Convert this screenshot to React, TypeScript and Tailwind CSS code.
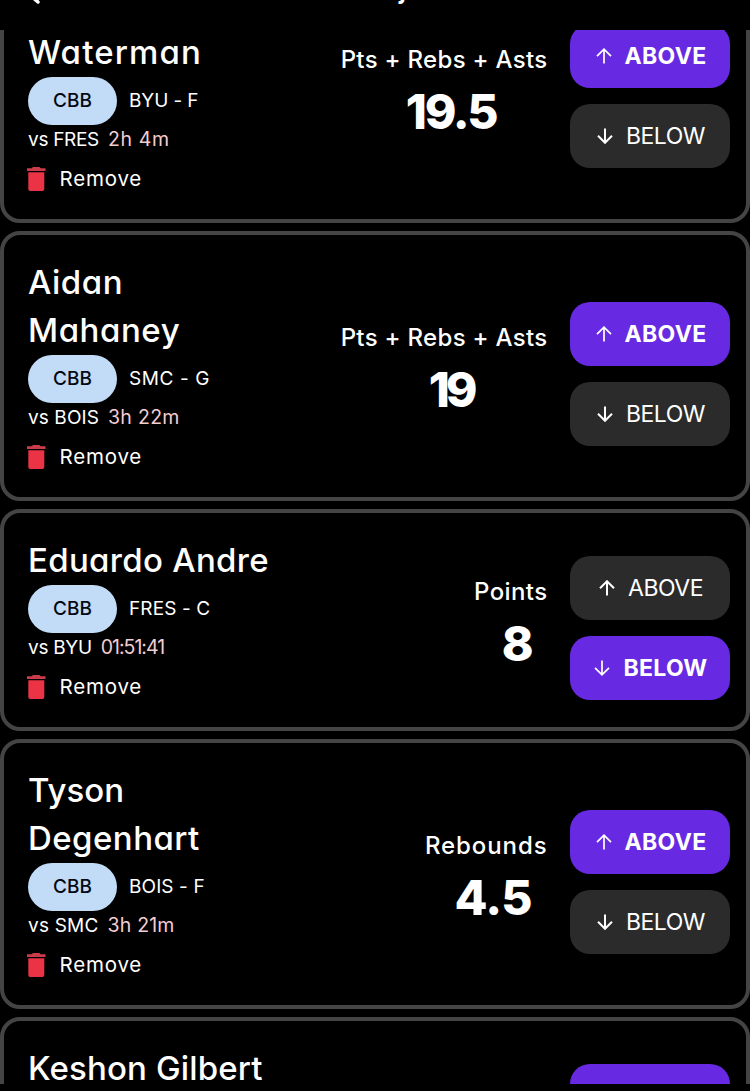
import * as React from "react";

type Pick = {
	name: { text: string; tracking: string }[];
	team: string;
	teamTracking: string;
	opponent: string;
	opponentTracking: string;
	starts: string;
	startsTracking: string;
	stat: string;
	statTracking: string;
	line: string;
	lineTracking: string;
	side: "above" | "below";
};

const picks: Pick[] = [
	{
		name: [
			{ text: "Robinson", tracking: "tracking-[0.5px]" },
			{ text: "Waterman", tracking: "tracking-[1.15px]" },
		],
		team: "BYU - F",
		teamTracking: "tracking-[-0.1px]",
		opponent: "vs FRES",
		opponentTracking: "tracking-[-0.3px]",
		starts: "2h 4m",
		startsTracking: "tracking-[0.6px]",
		stat: "Pts + Rebs + Asts",
		statTracking: "tracking-[0.3px]",
		line: "19.5",
		lineTracking: "tracking-[-2.2px]",
		side: "above",
	},
	{
		name: [
			{ text: "Aidan", tracking: "tracking-[0.5px]" },
			{ text: "Mahaney", tracking: "tracking-[0.55px]" },
		],
		team: "SMC - G",
		teamTracking: "tracking-[0.6px]",
		opponent: "vs BOIS",
		opponentTracking: "tracking-[0.1px]",
		starts: "3h 22m",
		startsTracking: "tracking-[0.3px]",
		stat: "Pts + Rebs + Asts",
		statTracking: "tracking-[0.3px]",
		line: "19",
		lineTracking: "tracking-[-4.2px]",
		side: "above",
	},
	{
		name: [{ text: "Eduardo Andre", tracking: "tracking-[0.3px]" }],
		team: "FRES - C",
		teamTracking: "tracking-[0.1px]",
		opponent: "vs BYU",
		opponentTracking: "tracking-[-0.3px]",
		starts: "01:51:41",
		startsTracking: "tracking-[-1px]",
		stat: "Points",
		statTracking: "tracking-[0.4px]",
		line: "8",
		lineTracking: "tracking-[0px]",
		side: "below",
	},
	{
		name: [
			{ text: "Tyson", tracking: "tracking-[0px]" },
			{ text: "Degenhart", tracking: "tracking-[0.45px]" },
		],
		team: "BOIS - F",
		teamTracking: "tracking-[0.1px]",
		opponent: "vs SMC",
		opponentTracking: "tracking-[0.2px]",
		starts: "3h 21m",
		startsTracking: "tracking-[0.2px]",
		stat: "Rebounds",
		statTracking: "tracking-[0.9px]",
		line: "4.5",
		lineTracking: "tracking-[-0.7px]",
		side: "above",
	},
	{
		name: [{ text: "Keshon Gilbert", tracking: "tracking-[0.15px]" }],
		team: "ISU - G",
		teamTracking: "tracking-[0px]",
		opponent: "vs TCU",
		opponentTracking: "tracking-[0px]",
		starts: "3h 21m",
		startsTracking: "tracking-[0.2px]",
		stat: "Points",
		statTracking: "tracking-[0.4px]",
		line: "12",
		lineTracking: "tracking-[0px]",
		side: "above",
	},
];

const Arrow = ({ down, thin }: { down?: boolean; thin?: boolean }) => (
	<svg
		width="16"
		height="16"
		viewBox="0 0 16 16"
		fill="none"
		stroke="currentColor"
		strokeWidth={thin ? 1.7 : 2}
		className={down ? "rotate-180" : ""}
	>
		<path d="M8 15.5V1.5M1 8.2l7-7 7 7" />
	</svg>
);

const Trash = () => (
	<svg width="20" height="24" viewBox="0 0 20 24" className="-ml-[1.5px]">
		<path d="M6 0h6.4l1.3 1.3h4.8V4H0V1.3h4.7z" fill="#c93c49" />
		<path d="M1.3 5.3h16V21.4a2.6 2.6 0 0 1-2.6 2.6H3.9a2.6 2.6 0 0 1-2.6-2.6z" fill="#ea3345" />
	</svg>
);

const SideButton = ({ side, active }: { side: "above" | "below"; active: boolean }) => (
	<button
		className={
			"flex h-16 w-40 items-center justify-center gap-[13px] rounded-[20px] pl-[2px] text-[23px] " +
			(active
				? "bg-[#672ae2] font-bold tracking-[0.3px]"
				: "bg-[#2b2b2b] font-normal tracking-[-0.5px]")
		}
	>
		<Arrow down={side === "below"} thin={active} />
		<span>{side === "above" ? "ABOVE" : "BELOW"}</span>
	</button>
);

const PickCard = ({ pick }: { pick: Pick }) => (
	<div className="flex shrink-0 items-center rounded-[20px] border-4 border-[#444] pt-6 pr-4 pb-4 pl-6">
		<div className="flex-1 whitespace-nowrap text-[19px]">
			<div className="-mt-px mb-px text-[33px] font-medium leading-[48px]">
				{pick.name.map((n) => (
					<div key={n.text} className={n.tracking}>
						{n.text}
					</div>
				))}
			</div>
			<div className="flex h-12 items-center gap-3">
				<span className="flex h-12 w-[89px] items-center justify-center rounded-full bg-[#c2dcf8] font-medium text-[#050a14]">
					CBB
				</span>
				<span className={pick.teamTracking}>{pick.team}</span>
			</div>
			<div className="flex h-[30px] items-center gap-[9px]">
				<span className={pick.opponentTracking}>{pick.opponent}</span>
				<span className={"text-[19.5px] text-[#f3cdd2] " + pick.startsTracking}>{pick.starts}</span>
			</div>
			<div className="flex h-12 items-center gap-[13px]">
				<Trash />
				<span className="text-[20.5px] tracking-[0.8px]">Remove</span>
			</div>
		</div>
		<div className="mr-[22.5px] whitespace-nowrap pt-[3px] text-center">
			<div className={"text-[24px] font-medium leading-9 " + pick.statTracking}>{pick.stat}</div>
			<div className={"pl-[14px] text-[48px] font-extrabold leading-[68px] " + pick.lineTracking}>
				{pick.line}
			</div>
		</div>
		<div className="flex flex-col gap-4 pt-2">
			<SideButton side="above" active={pick.side === "above"} />
			<SideButton side="below" active={pick.side === "below"} />
		</div>
	</div>
);

const App = () => {
	return (
		<div className="flex h-[1091px] w-[750px] flex-col overflow-hidden bg-black font-['Inter',sans-serif] text-white [font-feature-settings:'cv11']">
			<header className="flex h-[30px] shrink-0 items-start overflow-hidden">
				<svg width="12" height="6" viewBox="0 0 12 6" className="ml-[29px]">
					<path d="M1-5L9 2" stroke="white" strokeWidth="3.5" strokeLinecap="round" />
				</svg>
				<span className="-mt-[29px] ml-[358px] text-[30px] font-medium leading-8">j</span>
			</header>
			<main className="h-[1054px] shrink-0 overflow-hidden">
				<div className="-mt-[77px] flex flex-col gap-2">
					{picks.map((pick) => (
						<PickCard key={pick.name[0].text} pick={pick} />
					))}
				</div>
			</main>
		</div>
	);
};

export default App;
